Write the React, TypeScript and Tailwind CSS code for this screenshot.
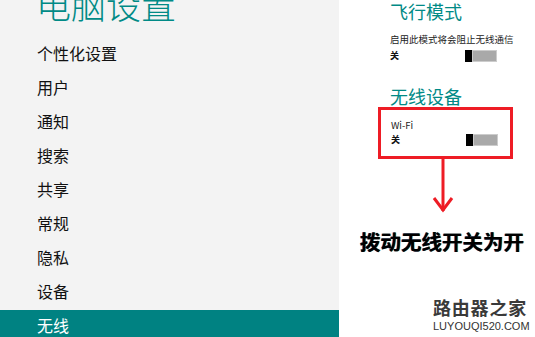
import React from 'react'

const cjk = { fontFamily: '"Noto Sans CJK SC", "Noto Sans", sans-serif' }

const menuItems = ['个性化设置', '用户', '通知', '搜索', '共享', '常规', '隐私', '设备', '无线']

const Toggle: React.FC = () => (
  <div className="flex h-[12px] w-[32px]">
    <div className="w-[7px] bg-black" />
    <div className="flex-1 bg-[#a9a9a9] border border-[#cccccc]" />
  </div>
)

const App: React.FC = () => {
  return (
    <div className="flex w-[535px] h-[337px] overflow-hidden bg-white" style={cjk}>
      {/* Left nav */}
      <aside className="w-[339px] shrink-0 bg-[#f3f3f3] flex flex-col">
        <h1 className="mt-[-13px] ml-[36px] h-[34px] leading-[34px] text-[35px] font-light text-[#008a86] whitespace-nowrap">
          电脑设置
        </h1>
        <nav className="mt-[17px] flex flex-col gap-[4px]">
          {menuItems.map(item => (
            <div
              key={item}
              className={`h-[30px] flex items-center pl-[37px] text-[16px] leading-none ${
                item === '无线' ? 'bg-[#008282] text-white' : 'text-[#111]'
              }`}
            >
              {item}
            </div>
          ))}
        </nav>
      </aside>

      {/* Right panel */}
      <section className="flex-1 flex flex-col pl-[39px]">
        <h2 className="mt-[1px] ml-[12px] h-[20px] leading-[20px] text-[18px] text-[#008a86]">飞行模式</h2>
        <p className="mt-[12px] ml-[12px] h-[12px] leading-[12px] text-[9.5px] text-[#222] whitespace-nowrap">
          启用此模式将会阻止无线通信
        </p>
        <div className="mt-[4px] ml-[12px] h-[13px] flex items-center">
          <span className="w-[75px] text-[9px] font-bold text-[#111] leading-none">关</span>
          <Toggle />
        </div>

        <h2 className="mt-[24px] ml-[12px] h-[20px] leading-[20px] text-[18px] text-[#008a86]">无线设备</h2>

        {/* Highlight box */}
        <div className="mt-[1px] w-[135px] h-[52px] border-[3px] border-[#ee1c25] flex flex-col pl-[10px]">
          <span className="mt-[9px] h-[12px] leading-[12px] text-[9.5px] text-[#222]">Wi-Fi</span>
          <div className="mt-[2px] h-[13px] flex items-center">
            <span className="w-[75px] text-[9px] font-bold text-[#111] leading-none">关</span>
            <Toggle />
          </div>
        </div>

        {/* Arrow */}
        <svg width="24" height="54" viewBox="0 0 24 54" className="ml-[53px] block">
          <line x1="12" y1="0" x2="12" y2="52" stroke="#ee1c25" strokeWidth="3" />
          <polyline points="3,39 12,51 21,39" fill="none" stroke="#ee1c25" strokeWidth="3" />
        </svg>

        <p
          className="mt-[16px] ml-[-18px] h-[24px] leading-[24px] text-[20.5px] font-bold text-black whitespace-nowrap"
          style={{ textShadow: '-0.5px 0 0 #3050c0, 0.5px 0 0 #b0a000' }}
        >
          拨动无线开关为开
        </p>

        {/* Watermark */}
        <div className="mt-[44px] ml-[55px] flex flex-col items-start">
          <span className="h-[20px] leading-[20px] text-[18px] font-bold text-[#3a3a3a] tracking-[0.8px]">路由器之家</span>
          <span
            className="mt-[3px] h-[12px] leading-[12px] text-[11px] text-[#333] whitespace-nowrap"
            style={{ fontFamily: '"Liberation Sans", Arial, sans-serif' }}
          >
            LUYOUQI520.COM
          </span>
        </div>
      </section>
    </div>
  )
}

export default App
